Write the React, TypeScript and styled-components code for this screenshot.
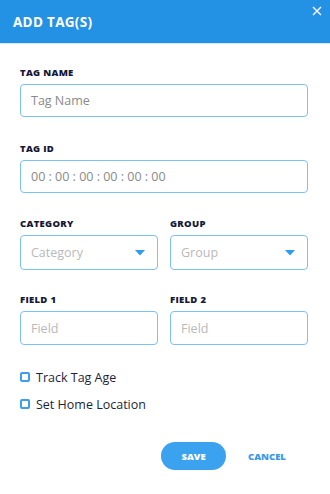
import React from "react";
import styled, { createGlobalStyle } from "styled-components";

const Global = createGlobalStyle`
  html, body { margin: 0; padding: 0; background: #ffffff; }
  body { font-family: "Open Sans", "Lato", sans-serif; }
  * { box-sizing: border-box; }
`;

const Dialog = styled.div`
  width: 330px;
  height: 494px;
  background: #fff;
  display: flex;
  flex-direction: column;
`;

const Header = styled.div`
  height: 44px;
  background: #2492e4;
  display: flex;
  align-items: center;
  padding: 0 13px;
  position: relative;
  border-bottom: 1px solid #d6e9f8;
`;

const Title = styled.h1`
  margin: 0;
  color: #fff;
  font-size: 13.5px;
  font-weight: 700;
  letter-spacing: 0.3px;
`;

const Close = styled.button`
  position: absolute;
  top: 4px;
  right: 6px;
  width: 14px;
  height: 14px;
  padding: 0;
  border: 0;
  background: none;
  display: flex;
  align-items: center;
  justify-content: center;
  cursor: pointer;
`;

const Body = styled.div`
  padding: 24px 22px 0 20px;
  display: flex;
  flex-direction: column;
`;

const Field = styled.div<{ $mb: number }>`
  display: flex;
  flex-direction: column;
  margin-bottom: ${(p) => p.$mb}px;
  min-width: 0;
`;

const Label = styled.label`
  font-size: 9.5px;
  font-weight: 800;
  color: #151836;
  line-height: 10px;
  margin-bottom: 6px;
  letter-spacing: 0.3px;
`;

const Input = styled.div<{ $h: number }>`
  height: ${(p) => p.$h}px;
  border: 1.5px solid #7bc0f7;
  border-radius: 4px;
  display: flex;
  align-items: center;
  justify-content: space-between;
  padding: 0 12px 0 10px;
  font-size: 12.5px;
  color: ${(p) => (p.$h > 33 ? "#b9b9b9" : "#8a8a8a")};
`;

const Row = styled.div`
  display: grid;
  grid-template-columns: 1fr 1fr;
  column-gap: 12px;
`;

const Check = styled.div`
  display: flex;
  align-items: center;
  gap: 6px;
  font-size: 12.5px;
  color: #1d1f3a;
  height: 16px;
`;

const Box = styled.span`
  width: 10px;
  height: 10px;
  border: 2px solid #3d9ef0;
  border-radius: 2px;
`;

const Checks = styled.div`
  display: flex;
  flex-direction: column;
  gap: 11px;
  margin-top: 24px;
`;

const Actions = styled.div`
  display: flex;
  align-items: center;
  margin-top: 30px;
  padding-left: 141px;
`;

const Save = styled.button`
  width: 65px;
  height: 28px;
  border-radius: 14px;
  border: 0;
  background: #3aa2ef;
  color: #fff;
  font-family: inherit;
  font-size: 9.5px;
  font-weight: 800;
`;

const Cancel = styled.button`
  margin-left: 22px;
  border: 0;
  background: none;
  color: #3a98e9;
  font-family: inherit;
  font-size: 9.5px;
  font-weight: 800;
  padding: 0;
`;

const Caret = () => (
  <svg width="10" height="6" viewBox="0 0 10 6">
    <path d="M0 0 H10 L5 5.5 Z" fill="#2e9cf0" />
  </svg>
);

export default function App() {
  return (
    <>
      <Global />
      <Dialog>
        <Header>
          <Title>ADD TAG(S)</Title>
          <Close aria-label="close">
            <svg width="10" height="10" viewBox="0 0 10 10">
              <path d="M1 1 L9 9 M9 1 L1 9" stroke="#fff" strokeWidth="1.4" />
            </svg>
          </Close>
        </Header>
        <Body>
          <Field $mb={27}>
            <Label>TAG NAME</Label>
            <Input $h={33}>Tag Name</Input>
          </Field>
          <Field $mb={26}>
            <Label>TAG ID</Label>
            <Input $h={33}>00 : 00 : 00 : 00 : 00 : 00</Input>
          </Field>
          <Row>
            <Field $mb={25}>
              <Label>CATEGORY</Label>
              <Input $h={35}>
                Category
                <Caret />
              </Input>
            </Field>
            <Field $mb={25}>
              <Label>GROUP</Label>
              <Input $h={35}>
                Group
                <Caret />
              </Input>
            </Field>
          </Row>
          <Row>
            <Field $mb={0}>
              <Label>FIELD 1</Label>
              <Input $h={34}>Field</Input>
            </Field>
            <Field $mb={0}>
              <Label>FIELD 2</Label>
              <Input $h={34}>Field</Input>
            </Field>
          </Row>
          <Checks>
            <Check>
              <Box />
              Track Tag Age
            </Check>
            <Check>
              <Box />
              Set Home Location
            </Check>
          </Checks>
          <Actions>
            <Save>SAVE</Save>
            <Cancel>CANCEL</Cancel>
          </Actions>
        </Body>
      </Dialog>
    </>
  );
}
